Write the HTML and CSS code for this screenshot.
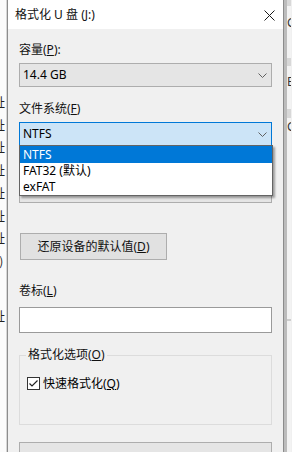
FILE: index.html
```html
<!DOCTYPE html>
<html lang="zh-CN">
<head>
<meta charset="utf-8">
<title>格式化 U 盘 (J:)</title>
<link rel="stylesheet" href="styles.css">
</head>
<body>
<div class="screen">
  <div class="bg-left">
    <div class="ghost-col">
      <span>址</span><span>址</span><span>址</span><span>址</span><span>址</span><span>址</span><span>址</span><span class="g-d">D)</span>
      <span class="g-last">址</span>
    </div>
  </div>
  <div class="dialog">
    <div class="titlebar">
      <span class="title">格式化 U 盘 (J:)</span>
      <svg class="close" width="11" height="11" viewBox="0 0 11 11"><path d="M0.5 0.5 L10.5 10.5 M10.5 0.5 L0.5 10.5" stroke="#1a1a1a" stroke-width="1" fill="none"/></svg>
    </div>
    <div class="body">
      <div class="label l1">容量(<u>P</u>):</div>
      <div class="combo"><span>14.4 GB</span><svg class="chev" width="9" height="5" viewBox="0 0 9 5"><path d="M0.5 0.5 L4.5 4.5 L8.5 0.5" stroke="#606060" fill="none"/></svg></div>
      <div class="label l2">文件系统(<u>F</u>)</div>
      <div class="combo-wrap">
        <div class="combo focused"><span>NTFS</span><svg class="chev" width="9" height="5" viewBox="0 0 9 5"><path d="M0.5 0.5 L4.5 4.5 L8.5 0.5" stroke="#606060" fill="none"/></svg></div>
        <ul class="dropdown">
          <li class="sel">NTFS</li>
          <li>FAT32 (默认)</li>
          <li>exFAT</li>
        </ul>
      </div>
      <div class="label l3"></div>
      <div class="combo"></div>
      <button class="btn">还原设备的默认值(<u>D</u>)</button>
      <div class="label l4">卷标(<u>L</u>)</div>
      <div class="input"></div>
      <fieldset class="group">
        <legend>格式化选项(<u>O</u>)</legend>
        <div class="check">
          <span class="box"><svg width="11" height="11" viewBox="0 0 11 11"><path d="M1.5 5.5 L4 8 L9.5 2.5" stroke="#222" stroke-width="1.2" fill="none"/></svg></span>
          <span>快速格式化(<u>Q</u>)</span>
        </div>
      </fieldset>
      <div class="combo bottom"></div>
    </div>
  </div>
  <div class="bg-right">
    <div class="shade"></div>
    <div class="rpane">
      <div class="band b0"></div>
      <span class="rl r1">G</span>
      <div class="band b1"></div>
      <span class="rl r2">B</span>
      <div class="band b2"></div>
      <span class="rl r3">G</span>
      <div class="rline"></div>
    </div>
  </div>
</div>
</body>
</html>
```

FILE: styles.css
```css
html, body {
  margin: 0;
  padding: 0;
  background: #f0f0f0;
}
.screen {
  width: 292px;
  height: 452px;
  overflow: hidden;
  display: flex;
  font-family: "Noto Sans", "Noto Sans CJK SC", sans-serif;
  font-size: 12px;
  color: #000;
}
u { text-decoration: underline; text-underline-offset: 1px; }

/* background window, left */
.bg-left {
  width: 6px;
  flex: none;
  background: #fbfbfb;
  border-right: 1px solid #d6d6d6;
  overflow: hidden;
}
.ghost-col {
  display: flex;
  flex-direction: column;
  padding-top: 91px;
  font-family: "Noto Sans CJK SC", sans-serif;
  font-size: 12px;
  line-height: 22.7px;
  color: #222;
}
.ghost-col span {
  display: block;
  margin-left: -7px;
  white-space: nowrap;
}
.ghost-col .g-d { margin-left: -9px; }
.ghost-col .g-last { margin-top: 32px; }

/* dialog */
.dialog {
  width: 275px;
  flex: none;
  border-left: 1px solid #8c8c8c;
  border-right: 1px solid #8c8c8c;
  background: #f0f0f0;
}
.titlebar {
  height: 29px;
  background: #fff;
  display: flex;
  align-items: center;
  justify-content: space-between;
  padding: 0 8px 0 7px;
}
.title {
  font-size: 12px;
  line-height: 16px;
  color: #111;
}
.close { display: block; margin-top: 1px; }

.body {
  padding: 13px 11px 0 11px;
}
.label {
  height: 16px;
  line-height: 16px;
  color: #111;
}
.l1 { margin-bottom: 5px; }
.l2 { margin-top: 14px; margin-bottom: 5px; }
.l3 { margin-top: 12px; margin-bottom: 5px; }
.l4 { margin-top: 23px; margin-bottom: 8px; }

.combo {
  box-sizing: border-box;
  height: 24px;
  border: 1px solid #adadad;
  background: #e5e5e5;
  display: flex;
  align-items: center;
  justify-content: space-between;
  padding: 0 4px 0 3px;
  line-height: 16px;
}
.combo.focused {
  background: #cce4f7;
  border-color: #0078d7;
}
.chev { display: block; margin-top: 1px; }

.combo-wrap {
  position: relative;
  z-index: 2;
}
.dropdown {
  position: absolute;
  top: 23px;
  left: 0;
  right: -1px;
  margin: 0;
  padding: 0;
  list-style: none;
  background: #fff;
  border: 1px solid #646464;
  box-shadow: 2px 2px 2px rgba(0, 0, 0, 0.35);
}
.dropdown li {
  height: 16px;
  line-height: 16px;
  padding-left: 3px;
  white-space: nowrap;
}
.dropdown li.sel {
  background: #0078d7;
  color: #fff;
  height: 17px;
  line-height: 17px;
}

.btn {
  display: block;
  box-sizing: border-box;
  margin: 30px 0 0 1px;
  width: 147px;
  height: 27px;
  padding: 0;
  border: 1px solid #adadad;
  background: #e1e1e1;
  font: inherit;
  color: #111;
  line-height: 16px;
  text-align: center;
}

.input {
  box-sizing: border-box;
  height: 26px;
  border: 1px solid #9a9a9a;
  background: #fff;
}

.group {
  margin: 14px 0 0 0;
  padding: 0 0 34px 6px;
  border: 1px solid #dcdcdc;
  min-width: 0;
}
.group legend {
  padding: 0 2px;
  line-height: 16px;
  height: 16px;
  color: #111;
}
.check {
  margin-top: 14px;
  margin-left: 1px;
  display: flex;
  align-items: center;
  gap: 3px;
  height: 13px;
  line-height: 16px;
}
.box {
  box-sizing: border-box;
  width: 13px;
  height: 13px;
  border: 1px solid #333;
  background: #fff;
  display: flex;
  align-items: center;
  justify-content: center;
}
.box svg { display: block; }

.combo.bottom {
  margin-top: 17px;
  height: 30px;
}

/* background window, right */
.bg-right {
  width: 7px;
  flex: none;
  display: flex;
}
.shade {
  width: 3px;
  background: #bcbcbc;
}
.rpane {
  width: 4px;
  background: #f3f3f3;
  display: flex;
  flex-direction: column;
  overflow: hidden;
  font-family: "Noto Sans", sans-serif;
  font-size: 12px;
  line-height: 14px;
  color: #333;
}
.band { background: #d8d8d8; flex: none; }
.b0 { height: 6px; }
.rl { display: block; margin-left: 0; }
.r1 { margin-top: 10px; }
.b1 { height: 8px; margin-top: 28px; }
.r2 { margin-top: 9px; }
.b2 { height: 9px; margin-top: 20px; }
.r3 { margin-top: 2px; }
.rline { height: 2px; background: #cfcfcf; margin-top: 185px; }
```
